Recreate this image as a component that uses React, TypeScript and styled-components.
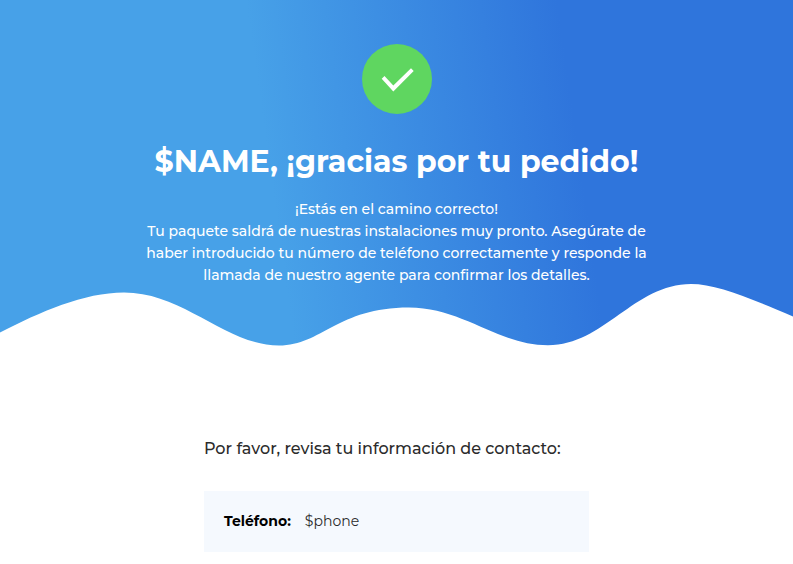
import React from 'react';
import styled, { createGlobalStyle } from 'styled-components';

const GlobalStyle = createGlobalStyle`
  *, *::before, *::after { box-sizing: border-box; }
  body { margin: 0; background: #fff; font-family: Montserrat, Inter, "Open Sans", sans-serif; color: #2b2b2b; }
`;

const Hero = styled.header`
  background: linear-gradient(82deg, #47a1e8 35%, #2f75dc 72%);
  color: #fff;
  text-align: center;
`;

const HeroContent = styled.div`
  display: flex;
  flex-direction: column;
  align-items: center;
  padding: 44px 16px 0;
`;

const Badge = styled.div`
  display: grid;
  place-items: center;
  width: 70px;
  height: 70px;
  border-radius: 50%;
  background: #5fd660;
`;

const Title = styled.h1`
  margin: 28px 0 0;
  font-size: 30px;
  line-height: 40px;
  font-weight: 700;
`;

const Message = styled.p`
  max-width: 510px;
  margin: 16px 0 0;
  font-size: 14px;
  line-height: 22px;
  font-weight: 500;
`;

const Wave = styled.svg`
  display: block;
  width: 100%;
  height: 62px;
  margin-top: -2px;
`;

const Contact = styled.main`
  width: 100%;
  max-width: 417px;
  margin: 0 auto;
  padding: 91px 16px 12px;
`;

const ContactTitle = styled.h2`
  margin: 0 0 30px;
  font-size: 16px;
  line-height: 24px;
  font-weight: 500;
`;

const Details = styled.dl`
  display: flex;
  gap: 14px;
  margin: 0;
  padding: 20px;
  background: #f5f9fe;
  font-size: 14px;
  line-height: 21px;
`;

const Label = styled.dt`
  color: #000;
  font-weight: 700;
`;

const Value = styled.dd`
  margin: 0;
`;

export default function App() {
  return (
    <>
      <GlobalStyle />
      <Hero>
        <HeroContent>
          <Badge>
            <svg width="34" height="26" viewBox="0 0 34 26" aria-hidden="true">
              <path d="M1.7 12.8 L4.5 10 L13.3 19.6 L31 2.2 L33.7 4.9 L13.3 25.4Z" fill="#fff" />
            </svg>
          </Badge>
          <Title>$NAME, ¡gracias por tu pedido!</Title>
          <Message>
            ¡Estás en el camino correcto!<br />
            Tu paquete saldrá de nuestras instalaciones muy pronto. Asegúrate de
            haber introducido tu número de teléfono correctamente y responde la
            llamada de nuestro agente para confirmar los detalles.
          </Message>
        </HeroContent>
        <Wave viewBox="0 0 793 62" preserveAspectRatio="none" aria-hidden="true">
          <path d="M0 48.5 C40 28 84 8.5 124 8.5 C184 8.5 226 61.5 279 61.5 C322 61.5 337 23.5 409 23.5 C463 23.5 498 61.2 548 61.2 C604 61.2 634 0 691 0 C716 0 750 14 793 32.5 V62 H0Z" fill="#fff" />
        </Wave>
      </Hero>
      <Contact>
        <ContactTitle>Por favor, revisa tu información de contacto:</ContactTitle>
        <Details>
          <Label>Teléfono:</Label>
          <Value>$phone</Value>
        </Details>
      </Contact>
    </>
  );
}
